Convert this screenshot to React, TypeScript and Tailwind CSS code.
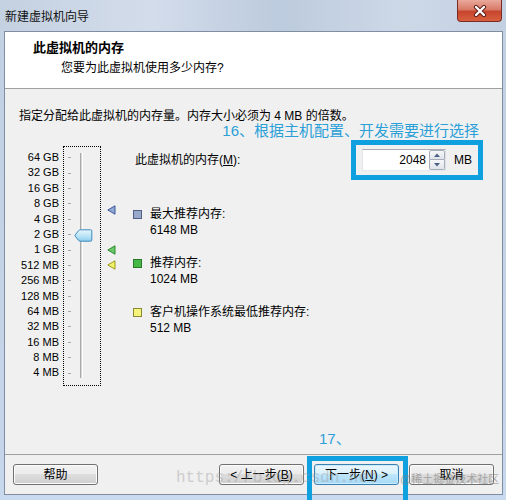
import React from "react";

const labels = ["64 GB", "32 GB", "16 GB", "8 GB", "4 GB", "2 GB", "1 GB", "512 MB", "256 MB", "128 MB", "64 MB", "32 MB", "16 MB", "8 MB", "4 MB"];

function Tri({ fill, stroke }: { fill: string; stroke: string }) {
  return (
    <svg width="9" height="10" viewBox="0 0 9 10">
      <path d="M8 0.8 L0.8 5 L8 9.2 Z" fill={fill} stroke={stroke} strokeWidth="1" strokeLinejoin="round" />
    </svg>
  );
}

function Legend({ sq, bd, label, value }: { sq: string; bd: string; label: string; value: string }) {
  return (
    <div className="flex">
      <div className="w-[17px] h-[16px] flex items-center">
        <div className="w-[9px] h-[9px] border" style={{ background: sq, borderColor: bd }} />
      </div>
      <div className="flex flex-col leading-[16px]">
        <div>{label}</div>
        <div className="text-[12px]">{value}</div>
      </div>
    </div>
  );
}

function Btn({ children, focus }: { children: React.ReactNode; focus?: boolean }) {
  return (
    <div
      className={
        "w-[85px] h-[21px] rounded-[3px] border flex items-center justify-center leading-[16px] text-[12px] " +
        (focus
          ? "border-[#3c7fb1] bg-[linear-gradient(180deg,#eaf6fd,#d9f0fc_50%,#bee6fd_50%,#a7d9f5)] shadow-[inset_0_0_0_1px_#c7ecff]"
          : "border-[#707070] bg-[linear-gradient(180deg,#f2f2f2,#ebebeb_50%,#dddddd_50%,#cfcfcf)] shadow-[inset_0_0_0_1px_#fcfcfc]")
      }
    >
      {children}
    </div>
  );
}

export default function App() {
  return (
    <div className="w-[506px] h-[500px] overflow-hidden flex flex-col bg-[linear-gradient(180deg,#cbd8e8,#c2d0e3_10%,#c6d5e9_90%,#c9d9ee)] font-['Liberation_Sans','Noto_Sans_CJK_SC',sans-serif] text-[12px] text-black">
      {/* title bar */}
      <div className="h-[31px] flex items-start bg-[linear-gradient(90deg,#c4d1e1,#d3dceb_30%,#bccbdd_55%,#cdd8e7_80%,#c2d0e2)]">
        <div className="pl-[5px] pt-[9px] leading-[16px] text-[12px] text-[#111]">新建虚拟机向导</div>
        <div className="ml-auto mr-[4px] w-[45px] h-[22px] rounded-b-[4px] border border-t-0 border-[#7b2c22] bg-[linear-gradient(180deg,#e9a99c,#d97a68_45%,#c7452d_55%,#d8603f)] flex items-center justify-center">
          <svg width="16" height="12" viewBox="0 0 16 12">
            <path d="M4 2 L12 10 M12 2 L4 10" stroke="#5a1a12" strokeWidth="4.2" strokeLinecap="round" />
            <path d="M4 2 L12 10 M12 2 L4 10" stroke="#ffffff" strokeWidth="2.4" strokeLinecap="round" />
          </svg>
        </div>
      </div>

      {/* client */}
      <div className="ml-[4px] mr-[3px] h-[464px] border border-[#7f8ea3] flex flex-col bg-[#f0f0f0]">
        {/* header */}
        <div className="h-[57px] bg-white border-b border-[#a0a0a0] flex flex-col">
          <div className="pl-[28px] pt-[8px] leading-[16px] text-[13px] font-bold">此虚拟机的内存</div>
          <div className="pl-[56px] mt-[4px] leading-[16px] text-[12px]">您要为此虚拟机使用多少内存?</div>
        </div>

        {/* body */}
        <div className="h-[365px] flex flex-col">
          <div className="pl-[14px] pt-[20px] leading-[14px] h-[34px]">指定分配给此虚拟机的内存量。内存大小必须为 4 MB 的倍数。</div>
          <div className="flex justify-end pr-[23px] h-[16px] leading-[18px] text-[15px] text-[#2a9fd8] -mt-[1px]">16、根据主机配置、开发需要进行选择</div>
          <div className="flex mt-[2px]">
            {/* labels */}
            <div className="w-[54px] pt-[10px] flex flex-col items-end text-[11px]">
              {labels.map((l) => (
                <div key={l} className="h-[15.4px] leading-[15.4px] whitespace-nowrap">{l}</div>
              ))}
            </div>
            {/* slider box */}
            <div className="ml-[4px] mt-[6px] w-[38px] h-[240px] border border-dotted border-black relative flex pt-[3px]">
              <div className="ml-[4px] w-[4px] flex flex-col">
                {labels.map((l) => (
                  <div key={l} className="h-[15.4px] flex items-center">
                    <div className="w-[3px] h-px bg-[#a8a8a8]" />
                  </div>
                ))}
              </div>
              <div className="ml-[8px] mt-[3px] w-[3px] h-[225px] flex">
                <div className="w-px h-full bg-[#a9a9a9]" />
                <div className="w-px h-full bg-[#d8d8d8]" />
                <div className="w-px h-full bg-white" />
              </div>
              <div className="absolute left-[10px] top-[82px]">
                <svg width="19" height="13" viewBox="0 0 19 13">
                  <defs>
                    <linearGradient id="th" x1="0" y1="0" x2="0" y2="1">
                      <stop offset="0" stopColor="#e6f6fd" />
                      <stop offset="0.5" stopColor="#bfe6f8" />
                      <stop offset="1" stopColor="#8fcfee" />
                    </linearGradient>
                  </defs>
                  <path d="M0.8 6.5 L4.5 1.6 Q5.2 0.8 6.3 0.8 H16.5 Q17.8 0.8 17.8 2 V11 Q17.8 12.2 16.5 12.2 H6.3 Q5.2 12.2 4.5 11.4 Z" fill="url(#th)" stroke="#3f8bbd" strokeWidth="1" />
                </svg>
              </div>
            </div>
            {/* markers */}
            <div className="mt-[6px] w-[32px] h-[240px] relative">
              <div className="absolute left-[6px] top-[59px]"><Tri fill="#8fa8d6" stroke="#3d5a98" /></div>
              <div className="absolute left-[6px] top-[99px]"><Tri fill="#6cc86c" stroke="#2a8a2a" /></div>
              <div className="absolute left-[6px] top-[114px]"><Tri fill="#f2f26a" stroke="#9a9a20" /></div>
            </div>
            {/* right column */}
            <div className="flex-1 flex flex-col">
              <div className="h-[40px] flex items-center">
                <div className="ml-[2px] leading-[16px]">此虚拟机的内存(<span className="underline">M</span>):</div>
                <div className="ml-auto mr-[19px] w-[132px] h-[40px] border-[5px] border-[#0ea0df] flex items-center pl-[6px]">
                  <div className="w-[84px] h-[22px] bg-white border border-[#abadb3] border-b-[#e3e9ef] border-l-[#e2e3ea] border-r-[#dbdfe6] flex items-center">
                    <div className="flex-1 text-right pr-[3px] leading-[16px]">2048</div>
                    <div className="w-[16px] h-[20px] flex flex-col">
                      <div className="h-[10px] border border-[#a7aeba] rounded-t-[2px] bg-[linear-gradient(180deg,#f6f7f9,#e1e5ea)] flex items-center justify-center">
                        <svg width="6" height="4" viewBox="0 0 6 4"><path d="M0 4 L3 0.5 L6 4 Z" fill="#4d6185" /></svg>
                      </div>
                      <div className="h-[10px] border border-t-0 border-[#a7aeba] rounded-b-[2px] bg-[linear-gradient(180deg,#f6f7f9,#e1e5ea)] flex items-center justify-center">
                        <svg width="6" height="4" viewBox="0 0 6 4"><path d="M0 0 L3 3.5 L6 0 Z" fill="#4d6185" /></svg>
                      </div>
                    </div>
                  </div>
                  <div className="ml-[8px] leading-[16px]">MB</div>
                </div>
              </div>
              <div className="mt-[26px] flex flex-col gap-[17px]">
                <Legend sq="#98a9cb" bd="#4f6186" label="最大推荐内存:" value="6148 MB" />
                <Legend sq="#45b845" bd="#2a7a2a" label="推荐内存:" value="1024 MB" />
                <Legend sq="#f4f47c" bd="#8a8a30" label="客户机操作系统最低推荐内存:" value="512 MB" />
              </div>
            </div>
          </div>
        </div>

        {/* footer */}
        <div className="h-[40px] border-t border-[#a0a0a0] flex pt-[9px] pl-[8px] pr-[8px] relative">
          <Btn>帮助</Btn>
          <div className="ml-auto flex gap-[10px]">
            <Btn>&lt; 上一步(<span className="underline">B</span>)</Btn>
            <div className="relative">
              <Btn focus>下一步(<span className="underline">N</span>) &gt;</Btn>
              <div className="absolute left-[-7px] top-[-8px] w-[101px] h-[50px] border-[5px] border-[#0ea0df]" />
              <div className="absolute left-[5px] top-[-33px] leading-[16px] text-[15px] text-[#2a9fd8] whitespace-nowrap">17、</div>
            </div>
            <Btn>取消</Btn>
          </div>
          <div className="absolute left-[171px] top-[14px] leading-[18px] text-[16px] font-['Liberation_Mono',monospace] text-[#9a9a9a] opacity-40 whitespace-nowrap pointer-events-none">https://blog.csdn.net</div>
          <div className="absolute left-[395px] top-[17px] leading-[14px] text-[11px] text-[#808080] opacity-60 whitespace-nowrap pointer-events-none">@稀土掘金技术社区</div>
        </div>
      </div>
    </div>
  );
}
